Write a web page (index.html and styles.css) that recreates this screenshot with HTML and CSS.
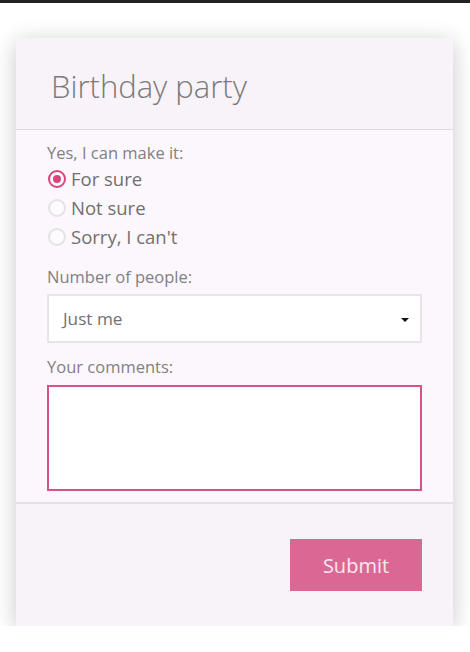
FILE: index.html
```html
<!DOCTYPE html>
<html>
<head>
<meta charset="utf-8">
<link rel="stylesheet" href="styles.css">
</head>
<body>
<div class="topbar"></div>
<div class="card">
  <div class="card-header">
    <h1 class="title">Birthday party</h1>
  </div>
  <div class="card-body">
    <div class="label">Yes, I can make it:</div>
    <div class="radios">
      <div class="radio-row"><span class="radio checked"></span><span class="radio-text">For sure</span></div>
      <div class="radio-row"><span class="radio"></span><span class="radio-text">Not sure</span></div>
      <div class="radio-row"><span class="radio"></span><span class="radio-text">Sorry, I can't</span></div>
    </div>
    <div class="label label-people">Number of people:</div>
    <div class="select">
      <span class="select-text">Just me</span>
      <span class="caret"></span>
    </div>
    <div class="label label-comments">Your comments:</div>
    <div class="textarea"></div>
  </div>
  <div class="card-footer">
    <div class="button">Submit</div>
  </div>
</div>
</body>
</html>
```
FILE: styles.css
```css
html, body {
  margin: 0;
  padding: 0;
  background: #ffffff;
  font-family: "Open Sans", "Noto Sans", sans-serif;
}
.topbar {
  height: 3px;
  background: #222222;
}
.card {
  margin: 35px 0 0 16px;
  width: 437px;
  height: 588px;
  display: flex;
  flex-direction: column;
  background: #fcf7fd;
  box-shadow: 0 4px 22px rgba(0, 0, 0, 0.22);
  border-radius: 2px;
}
.card-header {
  height: 92px;
  box-sizing: border-box;
  background: #f8f2f9;
  border-bottom: 1px solid #dcd7e0;
  padding: 27px 0 0 35px;
}
.title {
  margin: 0;
  font-weight: 300;
  font-size: 31px;
  line-height: 42px;
  color: #7a7a7a;
}
.card-body {
  padding: 12px 31px 11px 31px;
  display: flex;
  flex-direction: column;
  border-bottom: 2px solid #e3dfe6;
}
.label {
  font-size: 16.5px;
  line-height: 22px;
  color: #808080;
  font-weight: 400;
}
.radios {
  display: flex;
  flex-direction: column;
}
.radio-row {
  display: flex;
  align-items: center;
  height: 29px;
  margin-left: 1px;
}
.radio {
  width: 14px;
  height: 14px;
  border: 2px solid #e3e3e3;
  border-radius: 50%;
  box-sizing: content-box;
  position: relative;
  margin-right: 5px;
  background: #fdfbfd;
}
.radio.checked {
  border-color: #d9457f;
}
.radio.checked::after {
  content: "";
  position: absolute;
  left: 3px;
  top: 3px;
  width: 8px;
  height: 8px;
  border-radius: 50%;
  background: #d9457f;
}
.radio-text {
  font-size: 18.5px;
  color: #707070;
}
.label-people {
  margin-top: 15px;
}
.select {
  margin-top: 6px;
  height: 49px;
  box-sizing: border-box;
  border: 2px solid #e7e5e8;
  background: #ffffff;
  display: flex;
  align-items: center;
  justify-content: space-between;
  padding: 0 11px 0 14px;
}
.select-text {
  font-size: 17.2px;
  color: #707070;
}
.caret {
  width: 0;
  height: 0;
  border-left: 4px solid transparent;
  border-right: 4px solid transparent;
  border-top: 4px solid #111111;
  margin-top: 2px;
}
.label-comments {
  margin-top: 13px;
}
.textarea {
  margin-top: 7px;
  height: 106px;
  box-sizing: border-box;
  border: 2px solid #d9508a;
  background: #ffffff;
}
.card-footer {
  flex: 1;
  background: #f8f2f9;
  display: flex;
  justify-content: flex-end;
  align-items: flex-start;
  padding: 35px 31px 0 0;
}
.button {
  width: 132px;
  height: 52px;
  background: #db6894;
  color: #fbe8f0;
  font-size: 20px;
  display: flex;
  align-items: center;
  justify-content: center;
}
```
